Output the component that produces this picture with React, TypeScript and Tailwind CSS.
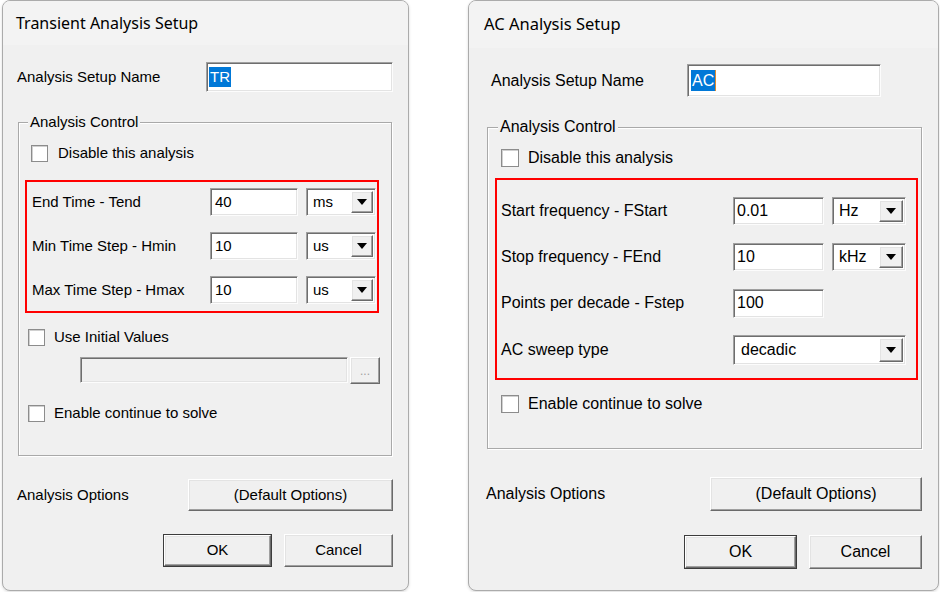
import React from "react";

// classic win32 3D borders
const sunken =
  "border border-t-[#a0a0a0] border-l-[#a0a0a0] border-r-[#fcfcfc] border-b-[#fcfcfc] shadow-[inset_1px_1px_0_#6e6e6e,inset_-1px_-1px_0_#e3e3e3]";
const raised =
  "border border-t-white border-l-white border-r-[#6a6a6a] border-b-[#6a6a6a] shadow-[inset_-1px_-1px_0_#a0a0a0,inset_1px_1px_0_#e3e3e3] bg-[#f0f0f0]";
const etched = "border border-[#a9a9a9] shadow-[inset_1px_1px_0_#ffffff,1px_1px_0_#ffffff]";

function Check({ className }: { className: string }) {
  return <span className={`shrink-0 border border-[#8c8c8c] bg-white shadow-[inset_1px_1px_0_#d0d0d0] ${className}`} />;
}

function TextBox({ value, className, pad }: { value: string; className: string; pad: string }) {
  return (
    <div className={`flex items-center bg-white ${sunken} ${pad} ${className}`}>
      <span>{value}</span>
    </div>
  );
}

function Arrow() {
  return (
    <svg width="10" height="6" viewBox="0 0 10 6" aria-hidden="true">
      <path d="M0 0h10L5 6z" fill="#000" />
    </svg>
  );
}

function Combo({ value, className, pad, btn }: { value: string; className: string; pad: string; btn: string }) {
  return (
    <div className={`flex items-stretch bg-white p-[2px] ${sunken} ${className}`}>
      <span className={`flex flex-1 items-center ${pad}`}>{value}</span>
      <span className={`flex items-center justify-center ${raised} ${btn}`}>
        <Arrow />
      </span>
    </div>
  );
}

function Btn({ label, className, def }: { label: string; className: string; def?: boolean }) {
  if (def) {
    return (
      <div className={`flex border border-[#3c3c3c] ${className}`}>
        <div className={`flex flex-1 items-center justify-center ${raised}`}>{label}</div>
      </div>
    );
  }
  return <div className={`flex items-center justify-center ${raised} ${className}`}>{label}</div>;
}

function TransientDialog() {
  return (
    <div className="ml-[2px] flex h-[591px] w-[407px] flex-col overflow-hidden rounded-[8px] border border-[#ababab] bg-[#f0f0f0] shadow-[0_1px_3px_rgba(0,0,0,0.15)]">
      <div className="flex h-[44px] shrink-0 items-center bg-[#f3f3f3] pl-[13px] font-['Noto_Sans',sans-serif] text-[16px]">
        Transient Analysis Setup
      </div>
      <div className="flex flex-col pl-[14px] pr-[15px] text-[15px]">
        <div className="mt-[17px] flex h-[30px] items-center justify-between">
          <span>Analysis Setup Name</span>
          <div className={`flex h-[30px] w-[187px] items-center bg-white pl-[2px] ${sunken}`}>
            <span className="bg-[#0078d7] px-[1px] leading-[20px] text-white">TR</span>
          </div>
        </div>

        <div className={`mx-[1px] mt-[30px] flex flex-col pb-[32px] ${etched}`}>
          <div className="-mt-[11px] ml-[9px] w-fit bg-[#f0f0f0] px-[2px] leading-[20px]">Analysis Control</div>
          <div className="ml-[12px] mt-[11px] flex h-[20px] items-center gap-[10px]">
            <Check className="h-[17px] w-[17px]" />
            <span>Disable this analysis</span>
          </div>

          <div className="ml-[6px] mr-[12px] mt-[17px] flex flex-col gap-[16px] border-2 border-[#ff0000] pb-[7px] pl-[5px] pr-[1px] pt-[6px]">
            {[
              ["End Time - Tend", "40", "ms"],
              ["Min Time Step - Hmin", "10", "us"],
              ["Max Time Step - Hmax", "10", "us"],
            ].map(([label, v, unit]) => (
              <div key={label} className="flex h-[28px] items-center">
                <span className="flex-1">{label}</span>
                <TextBox value={v} className="h-[28px] w-[88px]" pad="pl-[4px]" />
                <Combo value={unit} className="ml-[8px] h-[28px] w-[70px]" pad="pl-[4px]" btn="w-[22px]" />
              </div>
            ))}
          </div>

          <div className="ml-[9px] mt-[14px] flex h-[20px] items-center gap-[9px]">
            <Check className="h-[17px] w-[17px]" />
            <span>Use Initial Values</span>
          </div>
          <div className="ml-[61px] mt-[10px] flex h-[26px]">
            <div className={`h-[26px] w-[268px] bg-[#f0f0f0] ${sunken}`} />
            <div className={`ml-[2px] flex h-[27px] w-[30px] items-center justify-center text-[12px] text-[#a0a0a0] ${raised}`}>
              ...
            </div>
          </div>
          <div className="ml-[9px] mt-[20px] flex h-[20px] items-center gap-[9px]">
            <Check className="h-[17px] w-[17px]" />
            <span>Enable continue to solve</span>
          </div>
        </div>

        <div className="mt-[23px] flex h-[32px] items-center justify-between">
          <span>Analysis Options</span>
          <Btn label="(Default Options)" className="h-[32px] w-[205px]" />
        </div>
        <div className="mt-[23px] flex justify-end gap-[12px]">
          <Btn label="OK" className="h-[33px] w-[109px]" def />
          <Btn label="Cancel" className="h-[33px] w-[109px]" />
        </div>
      </div>
    </div>
  );
}

function AcDialog() {
  return (
    <div className="ml-[59px] flex h-[591px] w-[471px] flex-col overflow-hidden rounded-[8px] border border-[#ababab] bg-[#f0f0f0] shadow-[0_1px_3px_rgba(0,0,0,0.15)]">
      <div className="flex h-[47px] shrink-0 items-center bg-[#f3f3f3] pl-[15px] font-['Noto_Sans',sans-serif] text-[16.5px]">
        AC Analysis Setup
      </div>
      <div className="flex flex-col pl-[18px] pr-[16px] text-[16px]">
        <div className="mt-[16px] flex h-[33px] items-center">
          <span className="ml-[4px] w-[196px]">Analysis Setup Name</span>
          <div className={`flex h-[33px] w-[194px] items-center bg-white pl-[3px] ${sunken}`}>
            <span className="border-r border-[#e08a2c] bg-[#0078d7] px-[1px] leading-[21px] text-white">AC</span>
          </div>
        </div>

        <div className={`mt-[30px] flex flex-col pb-[34px] ${etched}`}>
          <div className="-mt-[11px] ml-[10px] w-fit bg-[#f0f0f0] px-[2px] leading-[20px]">Analysis Control</div>
          <div className="ml-[13px] mt-[11px] flex h-[20px] items-center gap-[9px]">
            <Check className="h-[18px] w-[18px]" />
            <span>Disable this analysis</span>
          </div>

          <div className="ml-[7px] mr-[3px] mt-[10px] flex flex-col gap-[18px] border-2 border-[#ff0000] pb-[13px] pl-[4px] pr-[10px] pt-[17px]">
            {[
              ["Start frequency - FStart", "0.01", "Hz"],
              ["Stop frequency - FEnd", "10", "kHz"],
            ].map(([label, v, unit]) => (
              <div key={label} className="flex h-[28px] items-center">
                <span className="flex-1">{label}</span>
                <TextBox value={v} className="h-[28px] w-[91px]" pad="pl-[3px]" />
                <Combo value={unit} className="ml-[8px] h-[28px] w-[74px]" pad="pl-[4px]" btn="w-[24px]" />
              </div>
            ))}
            <div className="flex h-[28px] items-center">
              <span className="flex-1">Points per decade - Fstep</span>
              <TextBox value="100" className="h-[29px] w-[91px]" pad="pl-[3px]" />
              <div className="ml-[8px] w-[74px]" />
            </div>
            <div className="flex h-[30px] items-center">
              <span className="flex-1">AC sweep type</span>
              <Combo value="decadic" className="h-[30px] w-[173px]" pad="pl-[5px]" btn="w-[24px]" />
            </div>
          </div>

          <div className="ml-[13px] mt-[14px] flex h-[20px] items-center gap-[9px]">
            <Check className="h-[18px] w-[18px]" />
            <span>Enable continue to solve</span>
          </div>
        </div>

        <div className="mt-[28px] flex h-[34px] items-center justify-between">
          <span className="-ml-[1px]">Analysis Options</span>
          <Btn label="(Default Options)" className="h-[34px] w-[212px]" />
        </div>
        <div className="mt-[24px] flex justify-end gap-[12px]">
          <Btn label="OK" className="h-[34px] w-[113px]" def />
          <Btn label="Cancel" className="h-[34px] w-[113px]" />
        </div>
      </div>
    </div>
  );
}

export default function App() {
  return (
    <div className="flex h-[592px] w-[940px] items-start overflow-hidden bg-white font-['Liberation_Sans',Arial,sans-serif] text-black">
      <TransientDialog />
      <AcDialog />
    </div>
  );
}
